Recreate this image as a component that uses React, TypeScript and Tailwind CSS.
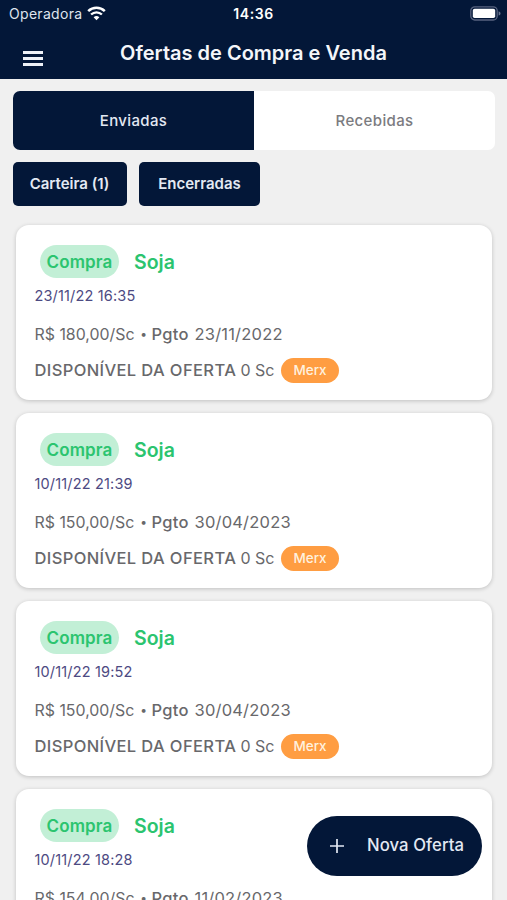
// Buy and sell offers screen: status bar, header, tabs, filters and the list of sent offers.

interface Offer {
  id: number;
  kind: string;
  product: string;
  createdAt: string;
  price: string;
  payment: string;
  available: string;
  origin: string;
}

const OFFERS: Offer[] = [
  { id: 1, kind: "Compra", product: "Soja", createdAt: "23/11/22 16:35", price: "R$ 180,00/Sc", payment: "23/11/2022", available: "0 Sc", origin: "Merx" },
  { id: 2, kind: "Compra", product: "Soja", createdAt: "10/11/22 21:39", price: "R$ 150,00/Sc", payment: "30/04/2023", available: "0 Sc", origin: "Merx" },
  { id: 3, kind: "Compra", product: "Soja", createdAt: "10/11/22 19:52", price: "R$ 150,00/Sc", payment: "30/04/2023", available: "0 Sc", origin: "Merx" },
  { id: 4, kind: "Compra", product: "Soja", createdAt: "10/11/22 18:28", price: "R$ 154,00/Sc", payment: "11/02/2023", available: "0 Sc", origin: "Merx" }
];

function WifiIcon() {
  return (
    <svg width="19" height="15" viewBox="0 0 19 15" fill="none" aria-hidden>
      <path d="M1.2 5.2a12 12 0 0 1 16.6 0" stroke="white" strokeWidth="2.5" />
      <path d="M4.1 8.5a7.8 7.8 0 0 1 10.8 0" stroke="white" strokeWidth="2.4" />
      <path d="M9.5 14.2 6.6 11.3a4.2 4.2 0 0 1 5.8 0z" fill="white" />
    </svg>
  );
}

function BatteryIcon() {
  return (
    <svg width="31" height="15" viewBox="0 0 31 15" fill="none" aria-hidden>
      <rect x="0.8" y="0.8" width="26.4" height="13.2" rx="4" stroke="#58637f" strokeWidth="1.3" />
      <rect x="2.8" y="2.8" width="22.4" height="9.2" rx="1.8" fill="white" />
      <path d="M28.6 5.2c1.3.5 1.9 1.3 1.9 2.2s-.6 1.7-1.9 2.2z" fill="#6b7691" />
    </svg>
  );
}

function StatusBar() {
  return (
    <div className="grid h-[27px] grid-cols-3 items-center pl-[9px] pr-[6px] text-[14px] text-white">
      <div className="flex items-center gap-[5px]">
        <span className="tracking-[0.3px] text-[#dfe4ee]">Operadora</span>
        <WifiIcon />
      </div>
      <span className="pr-[3px] text-center font-semibold tracking-[0.55px]">14:36</span>
      <div className="flex justify-end">
        <BatteryIcon />
      </div>
    </div>
  );
}

function Header() {
  return (
    <header className="h-[79px] shrink-0 bg-[#031738]">
      <StatusBar />
      <div className="grid h-[51px] grid-cols-[60px_1fr_60px] items-center">
        <button aria-label="Menu" className="ml-[23px] mt-[11px] flex w-5 flex-col gap-[3px]">
          <span className="h-[3px] bg-[#eef1f7]" />
          <span className="h-[3px] bg-[#eef1f7]" />
          <span className="h-[3px] bg-[#eef1f7]" />
        </button>
        <h1 className="whitespace-nowrap text-center text-[20px] font-semibold text-[#f4f6fa]">
          Ofertas de Compra e Venda
        </h1>
      </div>
    </header>
  );
}

function Tabs() {
  return (
    <div className="grid h-[59px] grid-cols-2 overflow-hidden rounded-[7px] bg-white text-[15px] font-medium tracking-[0.35px]">
      <button className="bg-[#031738] pt-[2px] text-[#e3e9f3]">Enviadas</button>
      <button className="pt-[2px] text-[#7b7b80]">Recebidas</button>
    </div>
  );
}

function OfferCard({ offer }: { offer: Offer }) {
  return (
    <article className="h-[175px] shrink-0 rounded-[13px] bg-white pl-[18.5px] pt-5 text-[#68686b] shadow-[0_1px_4px_rgba(0,0,0,0.2)]">
      <div className="flex h-[33px] items-center font-semibold text-[#2bc46f]">
        <span className="ml-[5.5px] flex h-[33px] w-[79px] items-center justify-center rounded-full bg-[#c2efd6] pt-[2px] text-[17px] tracking-[0.15px]">
          {offer.kind}
        </span>
        <span className="ml-[15px] pt-[2px] text-[19.5px]">{offer.product}</span>
      </div>
      <div className="mt-2 h-5 text-[14.5px] leading-5 tracking-[0.16px] text-[#4d4a82]">{offer.createdAt}</div>
      <div className="mt-4 flex h-6 items-center whitespace-nowrap text-[16.5px]">
        <span className="w-[101px] pt-px text-[15.9px]">{offer.price}</span>
        <span className="w-4 text-center text-[12px]">•</span>
        <span className="w-[43px] font-medium tracking-[0.3px]">Pgto</span>
        <span className="tracking-[0.2px]">{offer.payment}</span>
      </div>
      <div className="mt-3 flex h-6 items-center whitespace-nowrap text-[16.5px]">
        <span className="w-[206px] font-medium tracking-[0.38px]">DISPONÍVEL DA OFERTA</span>
        <span className="w-[40.5px] text-[16px]">{offer.available}</span>
        <span className="flex h-[25px] w-[58px] items-center justify-center rounded-full bg-[#ff9d42] text-[13.5px] font-medium text-[#fff1df]">
          {offer.origin}
        </span>
      </div>
    </article>
  );
}

export default function App() {
  return (
    <div className="relative flex h-[900px] w-[507px] flex-col overflow-hidden bg-[#f0f0f0] font-['Inter','Liberation_Sans',sans-serif]">
      <Header />
      <main className="flex flex-col pt-3">
        <div className="pl-[13px] pr-3">
          <Tabs />
          <div className="mt-3 flex gap-3 text-[15px] font-semibold text-[#e3e9f3]">
            <button className="h-11 w-[114px] rounded-[5px] bg-[#031738] pr-px pt-px">Carteira (1)</button>
            <button className="h-11 w-[121px] rounded-[5px] bg-[#031738] pt-px">Encerradas</button>
          </div>
        </div>
        <div className="mt-[19px] flex flex-col gap-[13px] pl-4 pr-[15px]">
          {OFFERS.map((offer) => (
            <OfferCard key={offer.id} offer={offer} />
          ))}
        </div>
      </main>
      <button className="absolute bottom-[24.5px] right-[25px] flex h-[60px] w-[175px] items-center rounded-full bg-[#031738] pl-[23px] text-[16.7px] font-medium text-[#e3e9f3]">
        <svg width="14" height="14" viewBox="0 0 14 14" stroke="currentColor" strokeWidth="1.7" aria-hidden>
          <path d="M7 0v14M0 7h14" />
        </svg>
        <span className="ml-[23px] whitespace-nowrap pt-px tracking-[0.08px]">Nova Oferta</span>
      </button>
    </div>
  );
}
